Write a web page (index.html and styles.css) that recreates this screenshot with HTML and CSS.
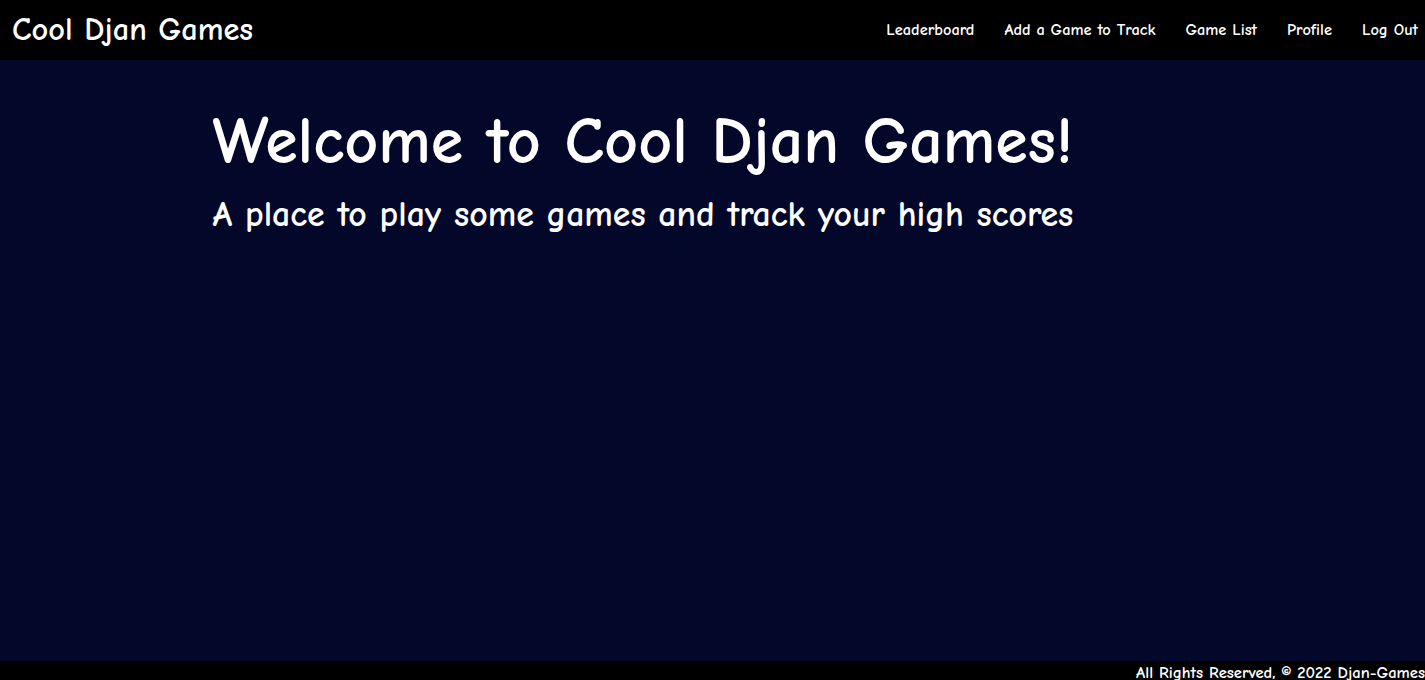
FILE: index.html
```html
<!DOCTYPE html>
<html lang="en">
<head>
<meta charset="utf-8">
<title>Cool Djan Games</title>
<link rel="stylesheet" href="styles.css">
</head>
<body>
<header class="topbar">
  <a class="brand" href="#">Cool Djan Games</a>
  <nav class="nav">
    <a href="#">Leaderboard</a>
    <a href="#">Add a Game to Track</a>
    <a href="#">Game List</a>
    <a href="#">Profile</a>
    <a href="#">Log Out</a>
  </nav>
</header>
<main class="main">
  <div class="hero">
    <h1 class="hero-title">Welcome to Cool Djan Games!</h1>
    <h2 class="hero-sub">A place to play some games and track your high scores</h2>
  </div>
</main>
<footer class="footer">
  <span class="footer-text">All Rights Reserved, © 2022 Djan-Games</span>
</footer>
</body>
</html>
```
FILE: styles.css
```css
html, body {
  margin: 0;
  height: 100%;
}
body {
  display: flex;
  flex-direction: column;
  height: 100vh;
  overflow: hidden;
  background: #03072a;
  color: #fff;
  font-family: "Comic Sans MS", "Comic Neue", "DejaVu Sans", sans-serif;
  font-weight: 700;
}
a { color: #fff; text-decoration: none; }
.topbar {
  height: 60px;
  flex: 0 0 60px;
  background: #000;
  display: flex;
  align-items: center;
  justify-content: space-between;
  padding: 0 7px 0 12px;
}
.brand {
  font-size: 32.4px;
  line-height: 1;
}
.nav {
  display: flex;
  gap: 30px;
  font-size: 16.4px;
  padding-bottom: 2px;
}
.main {
  flex: 1;
}
.hero {
  width: 1000px;
  margin: 0 auto;
  padding-top: 43px;
}
.hero-title {
  margin: 0;
  font-size: 66px;
  font-weight: 700;
  line-height: 1.2;
}
.hero-sub {
  margin: 12px 0 0;
  font-size: 35.8px;
  font-weight: 700;
  line-height: 1.2;
}
.footer {
  flex: 0 0 19px;
  background: #000;
  display: flex;
  justify-content: flex-end;
  font-size: 16.6px;
  line-height: 24px;
  white-space: nowrap;
  overflow: hidden;
}
.footer-text {
  margin-right: 0;
}
```
